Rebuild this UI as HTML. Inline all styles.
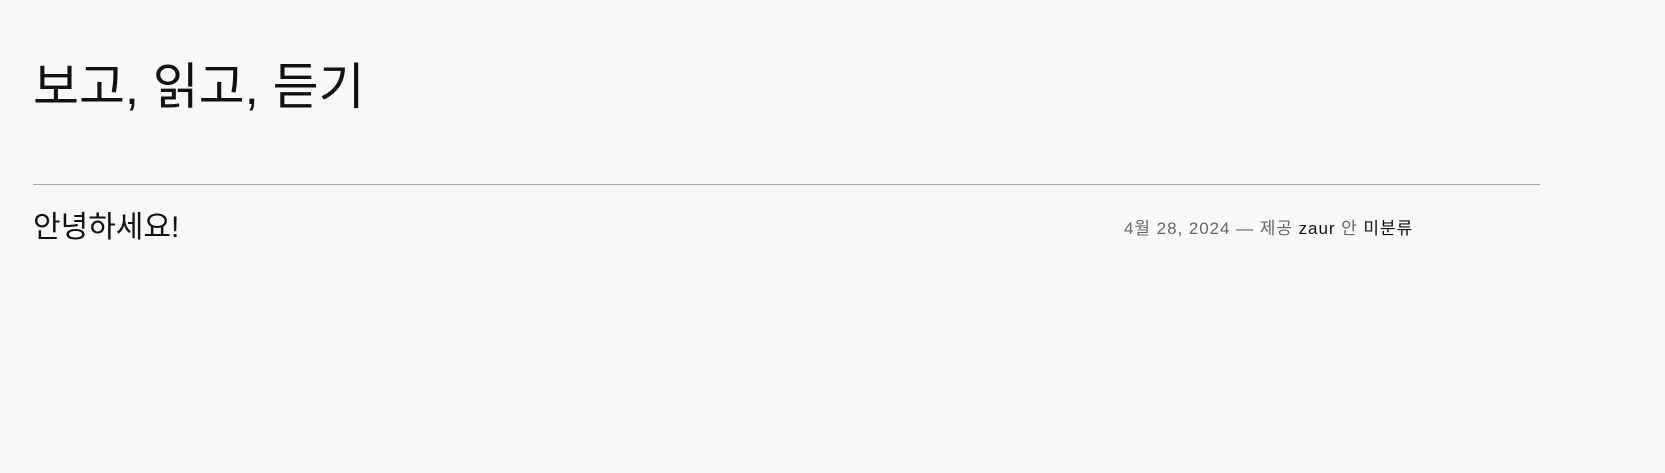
<!DOCTYPE html>
<html><head><meta charset="utf-8"><style>
body{margin:0;background:#f9f9f9;width:1665px;height:473px;overflow:hidden;font-family:"Liberation Sans","Noto Sans CJK KR",sans-serif;color:#111;}
h1{position:absolute;left:33px;top:52px;margin:0;font-weight:400;font-size:50px;line-height:70px;letter-spacing:0px;}
hr{position:absolute;left:33px;top:184px;width:1507px;margin:0;border:0;border-top:1px solid #aaa;}
.t{position:absolute;left:33px;top:207px;font-size:30px;line-height:42px;}
.m{position:absolute;left:1124px;top:216px;font-size:17px;line-height:26px;color:#666;letter-spacing:0.95px;white-space:nowrap;}
.m b{font-weight:400;color:#111;}
</style></head><body>
<h1>보고, 읽고, 듣기</h1>
<hr>
<div class="t">안녕하세요!</div>
<div class="m">4월 28, 2024 — 제공 <b>zaur</b> 안 <b>미분류</b></div>
</body></html>
